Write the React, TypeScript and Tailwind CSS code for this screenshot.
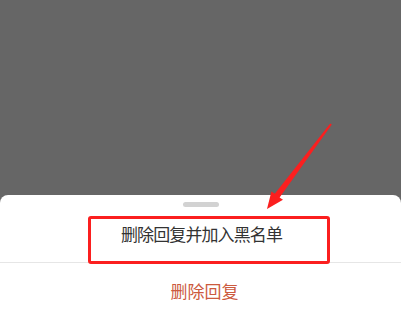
export default function App() {
  return (
    <div className="relative h-[329px] w-[401px] overflow-hidden bg-[#666666] font-['Noto_Sans_CJK_SC','Noto_Sans',sans-serif]">
      {/* Dimmed page */}
      <div className="h-[195px]" />

      {/* Bottom sheet */}
      <div className="flex h-[134px] flex-col rounded-t-[8px] bg-white">
        <div className="flex justify-center pt-[7px]">
          <div className="h-[5px] w-[36px] rounded-full bg-[#d2d2d2]" />
        </div>
        <div className="flex flex-1 items-center justify-center border-b border-[#e6e6e6] pb-[2px] pl-[2px] text-[17px] tracking-[-0.9px] text-[#333333]">
          删除回复并加入黑名单
        </div>
        <div className="flex h-[66px] items-center justify-center pb-[10px] pl-[8px] text-[17px] tracking-[0px] text-[#cc5a3e]">
          删除回复
        </div>
      </div>

      {/* Annotation box */}
      <div className="absolute left-[88px] top-[216px] h-[48px] w-[242px] rounded-[3px] border-[3px] border-[#fb1f1f]" />

      {/* Annotation arrow */}
      <svg className="pointer-events-none absolute inset-0" width="401" height="329" viewBox="0 0 401 329">
        <polygon
          points="267,209 271.4,191.6 274.8,193.8 330.2,123.4 331.8,124.6 279.6,197.4 283,199.8"
          fill="#fb1f1f"
        />
      </svg>
    </div>
  )
}
